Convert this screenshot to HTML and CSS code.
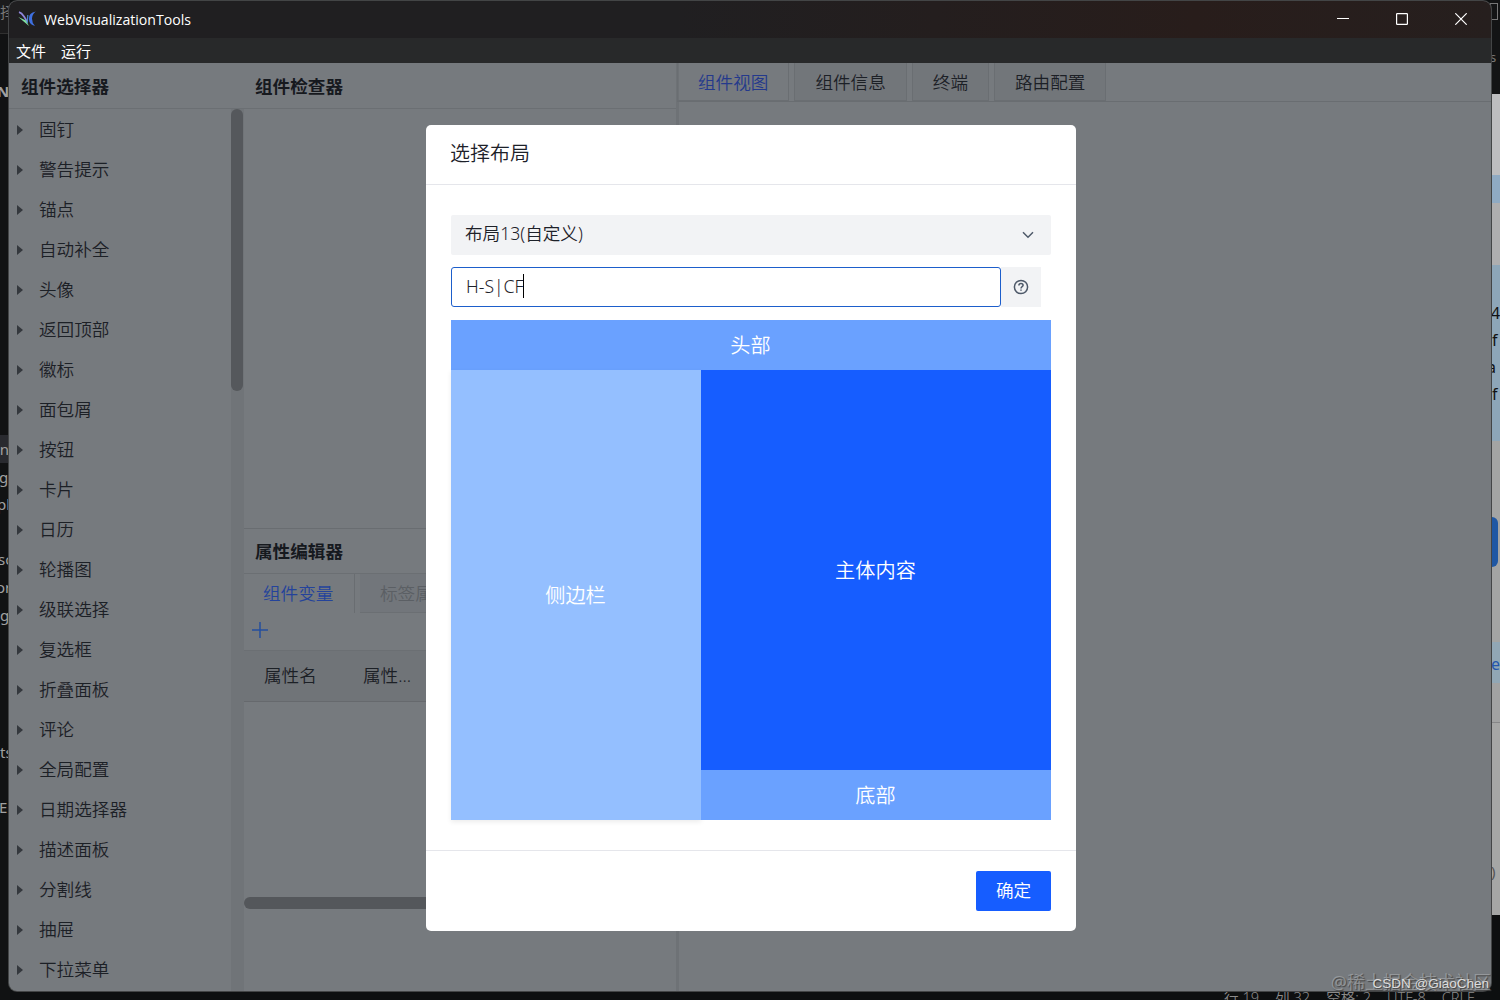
FILE: index.html
```
<!DOCTYPE html>
<html lang="zh-CN">
<head>
    <meta charset="utf-8">
    <title>WebVisualizationTools</title>
    <link rel="stylesheet" href="styles.css">
</head>
<body>
    <!-- editor behind the window, left edge -->
    <div class="behind-left">
        <div class="bl-head"></div>
        <div class="bl-row"></div>
        <span class="frag f-ze">择</span>
        <span class="frag f-n">N</span>
        <span class="frag f-in">in</span>
        <span class="frag f-g1">g</span>
        <span class="frag f-pl">pl</span>
        <span class="frag f-sc">sc</span>
        <span class="frag f-or">or</span>
        <span class="frag f-g2">g</span>
        <span class="frag f-ts">ts</span>
        <span class="frag f-e">Er</span>
    </div>

    <!-- browser behind the window, right edge -->
    <div class="behind-right">
        <div class="br-dark"></div>
        <div class="br-light"></div>
        <div class="br-blue"></div>
        <div class="br-grey"></div>
        <div class="br-code"></div>
        <div class="br-page"></div>
        <div class="br-link"></div>
        <div class="br-page2"></div>
        <div class="br-page3"></div>
        <span class="br-box"></span>
        <span class="br-button"></span>
        <span class="frag f-s">s</span>
        <span class="frag code f-4">4</span>
        <span class="frag code f-f1">f</span>
        <span class="frag code f-a">a</span>
        <span class="frag code f-f2">f</span>
        <span class="frag f-link">e</span>
        <span class="frag f-paren">)</span>
    </div>

    <div class="status-bar">
        <span>行 19</span>
        <span>列 32</span>
        <span>空格: 2</span>
        <span>UTF-8</span>
        <span>CRLF</span>
    </div>

    <div class="window">
        <div class="title-bar">
            <svg class="logo" width="19" height="16" viewBox="0 0 19 16">
                <path d="M1 1.2Q3.5 2 6 5.5T8.8 11" fill="none" stroke="#8f86dc" stroke-width="1.8"/>
                <path d="M0.3 6L11 15L8 9.6Z" fill="#80e0a0"/>
                <path d="M9.8 4L9.3 12" fill="none" stroke="#4a83c8" stroke-width="1.2"/>
                <path d="M17.8 0.6Q10.6 2 10.9 8Q11.2 13.6 17 15Q14 12 14 7.8Q14 3.5 17.8 0.6Z" fill="#3e6fe0"/>
            </svg>
            <span class="app-name">WebVisualizationTools</span>
            <div class="window-buttons">
                <svg width="12" height="12" viewBox="0 0 12 12"><path d="M0 5.5H12"/></svg>
                <svg width="12" height="12" viewBox="0 0 12 12"><rect x="0.6" y="0.6" width="10.8" height="10.8" rx="0.6"/></svg>
                <svg width="12" height="12" viewBox="0 0 12 12"><path d="M0.3 0.3L11.7 11.7M11.7 0.3L0.3 11.7"/></svg>
            </div>
        </div>
        <div class="menu-bar">
            <span>文件</span>
            <span>运行</span>
        </div>

        <div class="workspace">
            <div class="selector">
                <h2>组件选择器</h2>
                <div class="selector-body">
                    <ul class="tree">
                        <li>固钉</li>
                        <li>警告提示</li>
                        <li>锚点</li>
                        <li>自动补全</li>
                        <li>头像</li>
                        <li>返回顶部</li>
                        <li>徽标</li>
                        <li>面包屑</li>
                        <li>按钮</li>
                        <li>卡片</li>
                        <li>日历</li>
                        <li>轮播图</li>
                        <li>级联选择</li>
                        <li>复选框</li>
                        <li>折叠面板</li>
                        <li>评论</li>
                        <li>全局配置</li>
                        <li>日期选择器</li>
                        <li>描述面板</li>
                        <li>分割线</li>
                        <li>抽屉</li>
                        <li>下拉菜单</li>
                    </ul>
                    <div class="scroll-track"><div class="scroll-thumb"></div></div>
                </div>
            </div>

            <div class="middle">
                <div class="inspector"><h2>组件检查器</h2></div>
                <div class="editor">
                    <h2>属性编辑器</h2>
                    <div class="editor-tabs">
                        <span class="active">组件变量</span>
                        <span class="disabled">标签属性</span>
                    </div>
                    <div class="add-row">
                        <svg width="16" height="16" viewBox="0 0 16 16"><path d="M8 0V16M0 8H16"/></svg>
                    </div>
                    <div class="table-head">
                        <span>属性名</span>
                        <span>属性...</span>
                    </div>
                    <div class="table-body"></div>
                    <div class="h-scroll"></div>
                </div>
            </div>

            <div class="view">
                <div class="view-tabs">
                    <span class="active">组件视图</span>
                    <span>组件信息</span>
                    <span>终端</span>
                    <span>路由配置</span>
                </div>
            </div>
        </div>
    </div>

    <div class="modal">
        <div class="modal-header">选择布局</div>
        <div class="modal-body">
            <div class="select">
                <span>布局13(自定义)</span>
                <svg width="12" height="8" viewBox="0 0 12 8"><path d="M1 1.2L6 6.2L11 1.2"/></svg>
            </div>
            <div class="input-row">
                <div class="input"><span>H-S|CF</span><i class="caret"></i></div>
                <div class="help">
                    <svg width="16" height="16" viewBox="0 0 16 16">
                        <circle cx="8" cy="8" r="6.6"/>
                        <path d="M5.9 6.5C5.9 5.2 6.8 4.4 8 4.4S10.1 5.2 10.1 6.3C10.1 7.6 8 7.7 8 9.4M8 10.4V11.8"/>
                    </svg>
                </div>
            </div>
            <div class="preview">
                <div class="p-header">头部</div>
                <div class="p-main">
                    <div class="p-sider">侧边栏</div>
                    <div class="p-right">
                        <div class="p-content">主体内容</div>
                        <div class="p-footer">底部</div>
                    </div>
                </div>
            </div>
        </div>
        <div class="modal-footer"><button>确定</button></div>
    </div>

    <div class="watermark">@稀土掘金技术社区</div>
    <div class="watermark small">CSDN @GiaoChen</div>
</body>
</html>
```
FILE: styles.css
```
*, *::before, *::after {
    box-sizing: border-box;
}

body {
    margin: 0;
    width: 1500px;
    height: 1000px;
    position: relative;
    overflow: hidden;
    background: #0d0f10;
    color: #1c2026;
    font-family: "Noto Sans", "Noto Sans CJK SC", sans-serif;
    font-weight: 350;
    font-size: 17.6px;
    white-space: nowrap;
}

/* things showing from behind the window */
.behind-left {
    position: absolute;
    left: 0;
    top: 0;
    width: 10px;
    height: 1000px;
    overflow: hidden;
    background: #111213;
}

.bl-head {
    height: 34px;
    background: #1b1b1c;
    border-bottom: 1px solid #303030;
}

.bl-row {
    height: 28px;
    margin-top: 401px;
    background: #292a2f;
}

.frag {
    position: absolute;
    color: #a0a0a0;
    font-size: 15px;
    font-weight: 400;
    line-height: 20px;
}

.f-ze { left: 0; top: 2px; color: #777; }
.f-n { left: -3px; top: 81px; font-weight: 700; }
.f-in { left: -4px; top: 439px; }
.f-g1 { left: -1px; top: 467px; }
.f-pl { left: -3px; top: 494px; }
.f-sc { left: -2px; top: 549px; }
.f-or { left: -4px; top: 577px; }
.f-g2 { left: 0; top: 605px; }
.f-ts { left: 0; top: 742px; }
.f-e { left: -1px; top: 797px; }

.behind-right {
    position: absolute;
    left: 1490px;
    top: 0;
    width: 10px;
    height: 1000px;
    overflow: hidden;
}

.br-dark { height: 94px; background: #131415; }
.br-light { height: 81px; background: #bdbdbf; }
.br-blue { height: 28px; background: #8faac3; }
.br-grey { height: 62px; background: #aeaeaf; }
.br-code { height: 176px; background: #8da6b8; }
.br-page { height: 201px; background: #a3a4a3; }
.br-link { height: 41px; background: #91a7b5; }
.br-page2 { height: 40px; background: #a1a2a2; border-bottom: 1px solid #858687; }
.br-page3 { height: 192px; background: #a5a6a5; }

.br-box {
    position: absolute;
    left: 0;
    top: 3px;
    width: 8px;
    height: 17px;
    border: 1px solid #777;
}

.br-button {
    position: absolute;
    left: -10px;
    top: 517px;
    width: 18px;
    height: 50px;
    border-radius: 6px;
    background: #1f57a3;
}

.code { color: #111; font-size: 16px; }
.f-s { left: 0; top: 47px; font-size: 13px; color: #777; }
.f-4 { left: 1px; top: 303px; }
.f-f1 { left: 2px; top: 330px; }
.f-a { left: -3px; top: 357px; }
.f-f2 { left: 2px; top: 384px; }
.f-link { left: 1px; top: 654px; color: #2456ae; font-size: 16px; }
.f-paren { left: 1px; top: 861px; color: #555; }

.status-bar {
    position: absolute;
    left: 1224px;
    top: 987px;
    display: flex;
    gap: 16px;
    font-size: 14.6px;
    line-height: 20px;
    color: #8b8b8b;
}

/* main window */
.window {
    position: absolute;
    left: 9px;
    top: 1px;
    width: 1482px;
    height: 990px;
    display: flex;
    flex-direction: column;
    border-radius: 8px;
    overflow: hidden;
    background: #767a7e;
    box-shadow: 0 0 0 1px #434546;
}

.title-bar {
    height: 37px;
    flex: none;
    display: flex;
    align-items: center;
    padding: 0 0 1px 9px;
    background: linear-gradient(90deg, #201f21 0, #201f21 45%, #281d1b 80%, #261f1e 100%);
    color: #fff;
}

.app-name {
    margin-left: 7px;
    font-family: "Open Sans", sans-serif;
    font-size: 14.1px;
    font-weight: 400;
}

.window-buttons {
    margin-left: auto;
    margin-right: 24px;
    display: flex;
    gap: 47px;
}

.window-buttons svg {
    fill: none;
    stroke: #fff;
    stroke-width: 1.2;
}

.menu-bar {
    height: 25px;
    flex: none;
    display: flex;
    align-items: center;
    gap: 15px;
    padding-left: 7px;
    background: #28292a;
    color: #fff;
    font-size: 15px;
    font-weight: 400;
}

.workspace {
    flex: 1;
    display: flex;
    min-height: 0;
}

h2 {
    margin: 0;
    height: 46px;
    flex: none;
    padding: 0 0 0 11px;
    border-bottom: 1px solid #6b6f73;
    font-size: 17.6px;
    font-weight: 700;
    line-height: 46px;
    color: #16191e;
}

.selector {
    width: 235px;
    display: flex;
    flex-direction: column;
}

.selector h2 {
    padding-left: 12px;
}

.selector-body {
    flex: 1;
    display: flex;
    min-height: 0;
}

.tree {
    flex: 1;
    margin: 0;
    padding: 0 0 0 8px;
    list-style: none;
}

.tree li {
    height: 40px;
    display: flex;
    align-items: center;
    line-height: 38px;
    padding-bottom: 1px;
}

.tree li::before {
    content: "";
    width: 0;
    height: 0;
    margin: 2px 16px 0 0;
    border-left: 6px solid #34383d;
    border-top: 5px solid transparent;
    border-bottom: 5px solid transparent;
}

.scroll-track {
    width: 13px;
    background: #707478;
}

.scroll-thumb {
    width: 12px;
    height: 282px;
    border-radius: 6px;
    background: #55585c;
}

.middle {
    width: 432px;
    display: flex;
    flex-direction: column;
}

.inspector {
    height: 465px;
}

.editor {
    flex: 1;
    border-top: 1px solid #696d71;
}

.editor h2 {
    height: 45px;
    line-height: 44px;
}

.editor-tabs {
    display: flex;
    height: 39px;
    line-height: 38px;
}

.editor-tabs span {
    padding: 0 20px;
}

.editor-tabs .active {
    width: 111px;
    padding-left: 19px;
    border-right: 1px solid #696d71;
    color: #24439b;
}

.editor-tabs .disabled {
    margin-left: 5px;
    background: #72767b;
    color: #5b5f64;
    border-bottom: 1px solid #6b6f73;
}

.add-row {
    height: 37px;
    padding: 9px 0 0 8px;
    line-height: 0;
}

.add-row svg {
    stroke: #244f9e;
    stroke-width: 1.5;
}

.table-head {
    height: 52px;
    display: flex;
    padding-left: 20px;
    line-height: 48px;
    background: #707478;
    border-top: 1px solid #6b6f73;
    border-bottom: 1px solid #66696d;
}

.table-head span {
    width: 99px;
}

.table-body {
    height: 195px;
}

.h-scroll {
    width: 300px;
    height: 12px;
    border-radius: 6px;
    background: #54575b;
}

.view {
    flex: 1;
    border-left: 3px solid #6e7276;
}

.view-tabs {
    display: flex;
    gap: 5px;
    height: 39px;
    margin-left: -2px;
    border-bottom: 1px solid #696d71;
}

.view-tabs span {
    padding: 0 20px;
    line-height: 38px;
    background: #72767a;
    border: 1px solid #6a6e72;
    border-top: 0;
}

.view-tabs .active {
    background: none;
    color: #24398c;
}

/* layout dialog */
.modal {
    position: absolute;
    left: 426px;
    top: 125px;
    width: 650px;
    height: 806px;
    display: flex;
    flex-direction: column;
    border-radius: 5px;
    background: #fff;
    color: #1d2129;
}

.modal-header {
    height: 60px;
    padding-left: 24px;
    border-bottom: 1px solid #e5e6eb;
    font-size: 20px;
    line-height: 58px;
}

.modal-body {
    flex: 1;
    padding: 30px 25px;
}

.select {
    height: 40px;
    display: flex;
    align-items: center;
    justify-content: space-between;
    padding: 0 17px 0 14px;
    border-radius: 2px;
    background: #f2f3f5;
    line-height: 37px;
}

.select span {
    padding-bottom: 3px;
}

.select svg, .help svg {
    fill: none;
    stroke: #4e5969;
    stroke-width: 1.5;
}

.input-row {
    display: flex;
    margin: 12px 0 13px;
}

.input {
    width: 550px;
    height: 40px;
    display: flex;
    align-items: center;
    padding-left: 14px;
    border: 1px solid #1d5ecb;
    border-radius: 3px;
}

.input span {
    padding-bottom: 2px;
}

.caret {
    width: 1px;
    height: 24px;
    margin-bottom: 2px;
    background: #000;
}

.help {
    width: 40px;
    display: flex;
    align-items: center;
    justify-content: center;
    padding-right: 1px;
    background: #f2f3f5;
}

.preview {
    color: #fff;
    font-size: 20.2px;
}

.p-header, .p-sider, .p-content, .p-footer {
    display: flex;
    align-items: center;
    justify-content: center;
    padding: 0 1px 2px 0;
}

.p-header, .p-footer {
    height: 50px;
    background: #6aa1ff;
}

.p-main {
    display: flex;
    height: 450px;
}

.p-sider {
    width: 250px;
    background: #94bfff;
    box-shadow: 0 2px 5px rgba(0, 0, 0, 0.08);
}

.p-right {
    flex: 1;
    z-index: 1;
}

.p-content {
    height: 400px;
    background: #165dff;
}

.modal-footer {
    height: 81px;
    display: flex;
    justify-content: flex-end;
    padding: 20px 25px 0;
    border-top: 1px solid #e5e6eb;
}

button {
    width: 75px;
    height: 40px;
    padding: 0 0 3px;
    border: 0;
    border-radius: 2px;
    background: #165dff;
    color: #fff;
    font: inherit;
}

.watermark {
    position: absolute;
    right: 9px;
    top: 969px;
    font-size: 18px;
    font-weight: 400;
    line-height: 26px;
    color: rgba(175, 178, 180, 0.6);
    text-shadow: 1px 1px 1px #444;
}

.watermark.small {
    right: 11px;
    top: 974px;
    font-family: "Liberation Sans", sans-serif;
    font-size: 13.5px;
    line-height: 20px;
    color: #ddd;
}
```
